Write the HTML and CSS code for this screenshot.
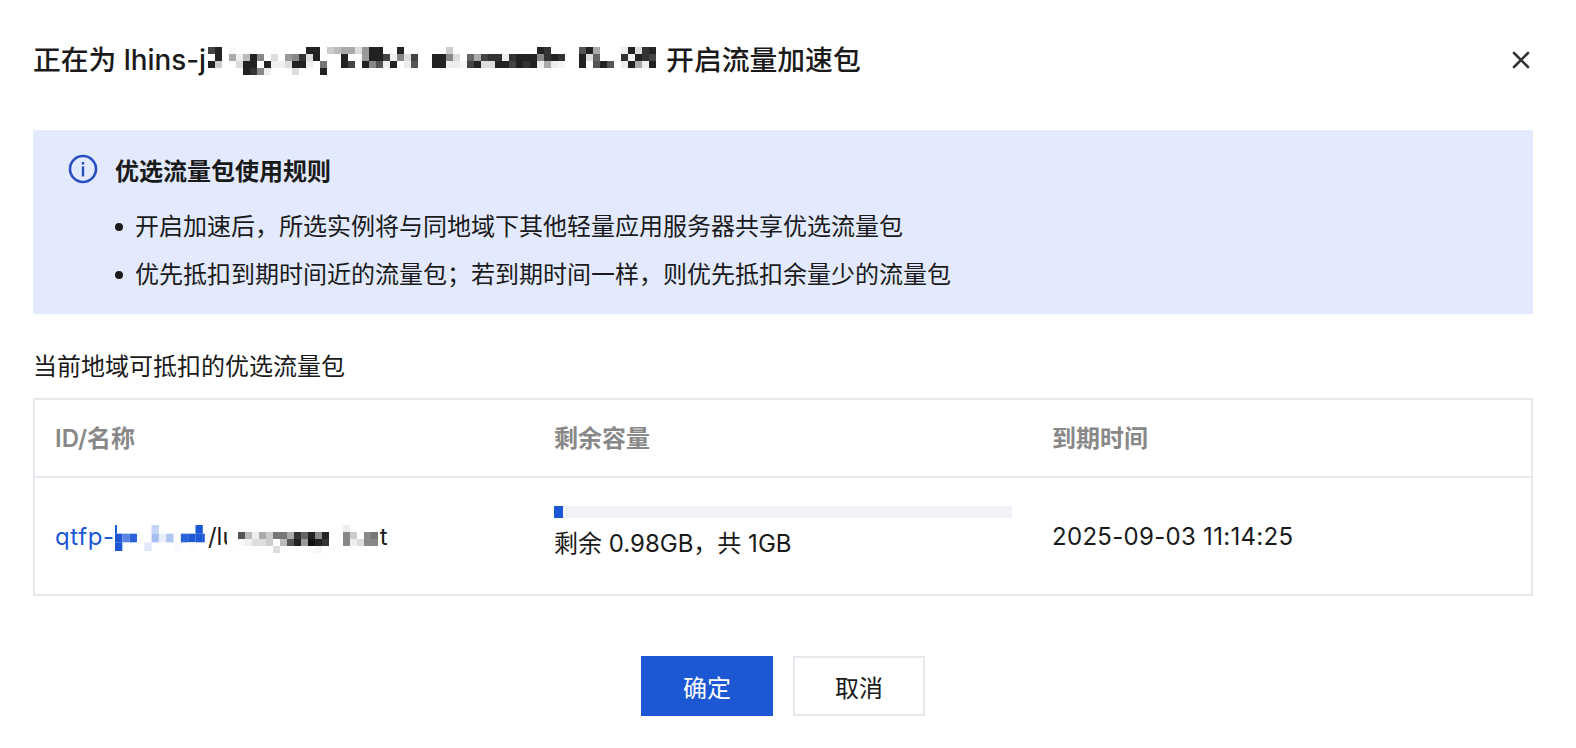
FILE: index.html
```html
<!DOCTYPE html>
<html>
<head>
<meta charset="utf-8">
<title>开启流量加速包</title>
<link rel="stylesheet" href="styles.css">
</head>
<body>
<div class="dialog">
	<div class="header">
		<div class="title">
			<span>正在为 lhins-j</span>
			<svg class="mosaic title-mosaic" viewBox="0 0 64 4">
				<g>
				<rect x="0" y="0" fill="#444"/><rect x="1" y="0" fill="#222"/><rect x="3" y="0" fill="#f8f8f8"/><rect x="14" y="0" fill="#222"/><rect x="15" y="0" fill="#222"/><rect x="17" y="0" fill="#ccc"/><rect x="18" y="0" fill="#bbb"/><rect x="19" y="0" fill="#aaa"/><rect x="20" y="0" fill="#aaa"/><rect x="21" y="0" fill="#ddd"/><rect x="22" y="0" fill="#999"/><rect x="23" y="0" fill="#222"/><rect x="24" y="0" fill="#222"/><rect x="27" y="0" fill="#222"/>
				<rect x="1" y="1" fill="#222"/><rect x="3" y="1" fill="#aaa"/><rect x="4" y="1" fill="#eee"/><rect x="5" y="1" fill="#bbb"/><rect x="6" y="1" fill="#222"/><rect x="7" y="1" fill="#888"/><rect x="9" y="1" fill="#ddd"/><rect x="11" y="1" fill="#999"/><rect x="12" y="1" fill="#888"/><rect x="13" y="1" fill="#333"/><rect x="14" y="1" fill="#ddd"/><rect x="15" y="1" fill="#222"/><rect x="19" y="1" fill="#222"/><rect x="22" y="1" fill="#999"/><rect x="23" y="1" fill="#222"/><rect x="24" y="1" fill="#222"/><rect x="25" y="1" fill="#444"/><rect x="26" y="1" fill="#f0f0f0"/><rect x="27" y="1" fill="#888"/><rect x="28" y="1" fill="#ddd"/><rect x="29" y="1" fill="#444"/>
				<rect x="0" y="2" fill="#222"/><rect x="1" y="2" fill="#ccc"/><rect x="4" y="2" fill="#ddd"/><rect x="5" y="2" fill="#222"/><rect x="6" y="2" fill="#222"/><rect x="8" y="2" fill="#222"/><rect x="9" y="2" fill="#f0f0f0"/><rect x="10" y="2" fill="#f0f0f0"/><rect x="11" y="2" fill="#ddd"/><rect x="12" y="2" fill="#222"/><rect x="13" y="2" fill="#222"/><rect x="14" y="2" fill="#eee"/><rect x="16" y="2" fill="#777"/><rect x="19" y="2" fill="#222"/><rect x="20" y="2" fill="#444"/><rect x="22" y="2" fill="#222"/><rect x="23" y="2" fill="#888"/><rect x="24" y="2" fill="#555"/><rect x="25" y="2" fill="#eee"/><rect x="26" y="2" fill="#222"/><rect x="28" y="2" fill="#eee"/><rect x="29" y="2" fill="#555"/>
				<rect x="5" y="3" fill="#222"/><rect x="6" y="3" fill="#333"/><rect x="7" y="3" fill="#888"/><rect x="8" y="3" fill="#eee"/><rect x="12" y="3" fill="#ddd"/><rect x="16" y="3" fill="#222"/>
				</g>
				<g transform="translate(32 0)">
				<rect x="2" y="0" fill="#ccc"/><rect x="15" y="0" fill="#222"/><rect x="16" y="0" fill="#333"/><rect x="21" y="0" fill="#555"/><rect x="22" y="0" fill="#222"/><rect x="23" y="0" fill="#aaa"/><rect x="27" y="0" fill="#eee"/><rect x="28" y="0" fill="#222"/><rect x="29" y="0" fill="#ddd"/><rect x="30" y="0" fill="#333"/><rect x="31" y="0" fill="#222"/>
				<rect x="0" y="1" fill="#222"/><rect x="1" y="1" fill="#222"/><rect x="2" y="1" fill="#888"/><rect x="3" y="1" fill="#ddd"/><rect x="5" y="1" fill="#666"/><rect x="6" y="1" fill="#aaa"/><rect x="7" y="1" fill="#444"/><rect x="8" y="1" fill="#333"/><rect x="9" y="1" fill="#333"/><rect x="10" y="1" fill="#eee"/><rect x="11" y="1" fill="#333"/><rect x="12" y="1" fill="#222"/><rect x="13" y="1" fill="#222"/><rect x="14" y="1" fill="#222"/><rect x="15" y="1" fill="#888"/><rect x="16" y="1" fill="#333"/><rect x="17" y="1" fill="#222"/><rect x="18" y="1" fill="#333"/><rect x="21" y="1" fill="#222"/><rect x="22" y="1" fill="#ddd"/><rect x="23" y="1" fill="#666"/><rect x="27" y="1" fill="#333"/><rect x="28" y="1" fill="#f0f0f0"/><rect x="29" y="1" fill="#222"/><rect x="30" y="1" fill="#333"/><rect x="31" y="1" fill="#444"/>
				<rect x="0" y="2" fill="#222"/><rect x="1" y="2" fill="#222"/><rect x="2" y="2" fill="#eee"/><rect x="3" y="2" fill="#eee"/><rect x="4" y="2" fill="#f5f5f5"/><rect x="5" y="2" fill="#444"/><rect x="6" y="2" fill="#222"/><rect x="7" y="2" fill="#ddd"/><rect x="8" y="2" fill="#ddd"/><rect x="9" y="2" fill="#222"/><rect x="10" y="2" fill="#222"/><rect x="11" y="2" fill="#444"/><rect x="12" y="2" fill="#222"/><rect x="13" y="2" fill="#333"/><rect x="14" y="2" fill="#222"/><rect x="15" y="2" fill="#eee"/><rect x="16" y="2" fill="#aaa"/><rect x="17" y="2" fill="#eee"/><rect x="18" y="2" fill="#f5f5f5"/><rect x="21" y="2" fill="#222"/><rect x="23" y="2" fill="#555"/><rect x="24" y="2" fill="#222"/><rect x="25" y="2" fill="#555"/><rect x="27" y="2" fill="#eee"/><rect x="28" y="2" fill="#222"/><rect x="29" y="2" fill="#aaa"/><rect x="30" y="2" fill="#eee"/><rect x="31" y="2" fill="#222"/>
				</g>
			</svg>
			<span>开启流量加速包</span>
		</div>
		<button class="close" type="button" aria-label="关闭">
			<svg viewBox="0 0 18 18" width="18" height="18"><path d="M2 2L16 16M16 2L2 16" stroke="#333" stroke-width="2.6" stroke-linecap="round" fill="none"/></svg>
		</button>
	</div>

	<div class="notice">
		<div class="notice-title">
			<svg class="info-icon" viewBox="0 0 30 30" width="30" height="30">
				<circle cx="15" cy="15" r="13" fill="none" stroke="#2a4fc0" stroke-width="2.6"/>
				<rect x="13.8" y="8" width="2.4" height="2.6" fill="#2a4fc0"/>
				<rect x="13.8" y="12.4" width="2.4" height="10" fill="#2a4fc0"/>
			</svg>
			<span>优选流量包使用规则</span>
		</div>
		<ul class="rules">
			<li>开启加速后，所选实例将与同地域下其他轻量应用服务器共享优选流量包</li>
			<li>优先抵扣到期时间近的流量包；若到期时间一样，则优先抵扣余量少的流量包</li>
		</ul>
	</div>

	<p class="caption">当前地域可抵扣的优选流量包</p>

	<div class="table">
		<div class="row head">
			<div class="cell">ID/名称</div>
			<div class="cell">剩余容量</div>
			<div class="cell">到期时间</div>
		</div>
		<div class="row body">
			<div class="cell name-cell">
				<a class="link">qtfp-</a>
				<svg class="mosaic blue-mosaic" viewBox="0 0 12.3 3" preserveAspectRatio="none">
					<rect x="0" y="0" class="thin" fill="#1c57d4"/><rect x="5" y="0" fill="#c5d3f5"/><rect x="11" y="0" fill="#1c57d4"/>
					<rect x="0" y="1" fill="#1c57d4"/><rect x="1" y="1" fill="#5a82e0"/><rect x="2" y="1" fill="#2a62d8"/><rect x="5" y="1" fill="#a5bcee"/><rect x="6" y="1" fill="#e8eefb"/><rect x="7" y="1" fill="#b0c5f0"/><rect x="9" y="1" fill="#2a62d8"/><rect x="10" y="1" fill="#1c57d4"/><rect x="11" y="1" fill="#1c57d4"/><rect x="12" y="1" class="thin" fill="#1c57d4"/>
					<rect x="0" y="2" fill="#1c57d4"/><rect x="4" y="2" fill="#e0e8fa"/><rect x="8" y="2" fill="#fafbff"/><rect x="10" y="2" fill="#fafbff"/>
				</svg>
				<span class="slash">/lu</span>
				<svg class="mosaic gray-mosaic" viewBox="0 0 20 4">
					<rect x="15" y="0" fill="#eee"/>
					<rect x="0" y="1" fill="#555"/><rect x="1" y="1" fill="#bbb"/><rect x="2" y="1" fill="#eee"/><rect x="3" y="1" fill="#aaa"/><rect x="4" y="1" fill="#ccc"/><rect x="5" y="1" fill="#777"/><rect x="6" y="1" fill="#777"/><rect x="7" y="1" fill="#aaa"/><rect x="8" y="1" fill="#333"/><rect x="9" y="1" fill="#666"/><rect x="10" y="1" fill="#222"/><rect x="11" y="1" fill="#888"/><rect x="12" y="1" fill="#222"/><rect x="15" y="1" fill="#888"/><rect x="16" y="1" fill="#ccc"/><rect x="18" y="1" fill="#888"/><rect x="19" y="1" fill="#777"/>
					<rect x="0" y="2" fill="#fafafa"/><rect x="1" y="2" fill="#f0f0f0"/><rect x="2" y="2" fill="#ddd"/><rect x="3" y="2" fill="#ddd"/><rect x="4" y="2" fill="#ccc"/><rect x="6" y="2" fill="#bbb"/><rect x="7" y="2" fill="#555"/><rect x="8" y="2" fill="#222"/><rect x="9" y="2" fill="#999"/><rect x="10" y="2" fill="#111"/><rect x="11" y="2" fill="#222"/><rect x="12" y="2" fill="#333"/><rect x="15" y="2" fill="#888"/><rect x="16" y="2" fill="#eee"/><rect x="17" y="2" fill="#ddd"/><rect x="18" y="2" fill="#888"/><rect x="19" y="2" fill="#888"/>
					<rect x="5" y="3" fill="#ddd"/><rect x="11" y="3" fill="#f5f5f5"/>
				</svg>
				<span>t</span>
			</div>
			<div class="cell usage-cell">
				<div class="bar"><div class="bar-fill" style="width:2%"></div></div>
				<div class="usage-text">剩余 0.98GB，共 1GB</div>
			</div>
			<div class="cell date-cell">2025-09-03 11:14:25</div>
		</div>
	</div>

	<div class="footer">
		<button class="button primary" type="button">确定</button>
		<button class="button" type="button">取消</button>
	</div>
</div>
</body>
</html>
```

FILE: styles.css
```css
html, body {margin:0px; padding:0px; background:#fff;}
body {
	font-family: Inter, "Noto Sans CJK SC", sans-serif;
	font-size: 24px;
	color: #1a1a1a;
}
p {margin:0px;}

.dialog {
	width: 1500px;
	height: 748px;
	padding: 0 10px 0 33px;
	box-sizing: content-box;
	overflow: hidden;
}

.header {
	height: 120px;
	box-sizing: border-box;
	padding-bottom: 4px;
	display: flex;
	align-items: center;
	justify-content: space-between;
}
.title {
	display: flex;
	align-items: center;
	font-size: 27.8px;
	font-weight: 500;
	white-space: nowrap;
}
.mosaic rect {width:1px; height:1px;}
.mosaic rect.thin {width:0.27px;}
.mosaic {display:block; flex:none;}
.title-mosaic {width:448px; height:28px; margin:6px 10px 0 2px;}
.close {
	border: none;
	background: none;
	padding: 0;
	margin: 4px 3px 0 0;
	display: flex;
	cursor: pointer;
}

.notice {
	margin-top: 10px;
	height: 184px;
	box-sizing: border-box;
	padding: 23px 34px 0 35px;
	background: #e3eafd;
}
.notice-title {
	display: flex;
	align-items: center;
	gap: 17px;
	font-weight: 600;
	height: 32px;
}
.rules {
	list-style: none;
	margin: 18px 0 0 0;
	padding: 0 0 0 47px;
}
.rules li {
	height: 48px;
	line-height: 48px;
	display: flex;
	align-items: center;
	gap: 12px;
}
.rules li::before {
	content: "";
	width: 8px;
	height: 8px;
	border-radius: 50%;
	background: #1a1a1a;
	flex: none;
}

.caption {
	margin-top: 36px;
	height: 34px;
	line-height: 34px;
}

.table {
	margin-top: 14px;
	border: 2px solid #e7e7ee;
	height: 198px;
	box-sizing: border-box;
}
.row {
	display: grid;
	grid-template-columns: 499px 498px 1fr;
}
.head {
	height: 78px;
	box-sizing: border-box;
	padding-bottom: 4px;
	align-items: center;
	border-bottom: 2px solid #e7e7ee;
	color: #888;
	font-weight: 600;
}
.cell {padding-left: 20px;}
.body {
	height: 116px;
	align-items: center;
}
.name-cell {
	display: flex;
	align-items: center;
	white-space: nowrap;
}
.link {color:#1c57d4; letter-spacing:0.6px;}
.blue-mosaic {width:90px; height:26px; margin:4px 3px 0 0.4px;}
/* the white padding hides the end of the name, as the blur does in the original */
.gray-mosaic {
	width: 140px;
	height: 28px;
	padding-left: 11px;
	margin: 6px 2px 0 -10px;
	background: #fff;
	box-sizing: content-box;
}
.usage-cell {padding-bottom: 5px;}
.bar {
	width: 458px;
	height: 12px;
	background: #f1f2f7;
}
.bar-fill {height:100%; background:#1c57d4;}
.usage-text {margin-top: 9px; line-height: 34px;}
.date-cell {letter-spacing: 0.3px;}

.footer {
	margin-top: 60px;
	display: flex;
	justify-content: center;
	gap: 20px;
}
.button {
	width: 132px;
	height: 60px;
	border: 2px solid #e7e7ee;
	background: #fff;
	color: #1a1a1a;
	font-family: inherit;
	font-size: 24px;
	padding: 0;
	cursor: pointer;
}
.primary {
	background: #1c57d4;
	border: none;
	color: #fff;
}
```
